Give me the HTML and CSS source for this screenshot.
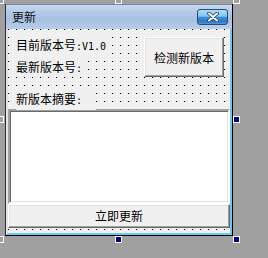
FILE: index.html
```html
<!DOCTYPE html>
<html>

<head>
    <meta charset="utf-8">
    <title>更新</title>
    <link rel="stylesheet" href="styles.css">
</head>

<body>
    <div class="form">
        <div class="titlebar">
            <span class="title">更新</span>
            <span class="close">
                <svg width="12" height="10" viewBox="0 0 12 10">
                    <path d="M2 1.5 L10 8.5 M10 1.5 L2 8.5" stroke="#23385a" stroke-width="3.6" stroke-linecap="round" fill="none"/>
                    <path d="M2 1.5 L10 8.5 M10 1.5 L2 8.5" stroke="#ffffff" stroke-width="2" stroke-linecap="round" fill="none"/>
                </svg>
            </span>
        </div>
        <div class="client">
            <div class="top">
                <span class="label lbl1">目前版本号<span class="half">:V1.0</span></span>
                <button class="check">检测新版本</button>
                <span class="label lbl2">最新版本号<span class="half">:</span></span>
                <span class="label lbl3">新版本摘要<span class="half">:</span></span>
            </div>
            <div class="memo"></div>
            <button class="update">立即更新</button>
            <div class="filler"></div>
        </div>
    </div>

    <!-- selection handles of the designer -->
    <span class="handle h-tl"></span>
    <span class="handle h-tm"></span>
    <span class="handle h-tr"></span>
    <span class="handle h-ml"></span>
    <span class="handle sel h-mr"></span>
    <span class="handle h-bl"></span>
    <span class="handle sel h-bm"></span>
    <span class="handle sel h-br"></span>
</body>

</html>
```

FILE: styles.css
```css
* {
    box-sizing: border-box;
    margin: 0px;
    padding: 0px;
}

body {
    position: relative;
    width: 268px;
    height: 258px;
    overflow: hidden;
    background: #a0a0a0;
    font-family: "Noto Sans CJK SC", "Liberation Sans", sans-serif;
    font-size: 12px;
    color: #000;
}

.form {
    width: 228px;
    margin: 4px 0 0 5px;
    border-left: 1px solid #2e2e2e;
    border-right: 1px solid #000;
    border-bottom: 1px solid #000;
}

.titlebar {
    height: 25px;
    display: flex;
    justify-content: space-between;
    align-items: flex-start;
    padding: 4px 4px 0 6px;
    border-top: 1px solid #6f86a8;
    background: linear-gradient(#c9daee 0%, #b3cae7 30%, #a7c1e2 60%, #b9cfea 100%);
}

.title {
    line-height: 16px;
    font-size: 12px;
    color: #111;
}

.close {
    width: 31px;
    height: 16px;
    display: flex;
    justify-content: center;
    align-items: center;
    border: 1px solid #34486a;
    border-radius: 3px;
    background: linear-gradient(#a9dcf7 0%, #80c8f1 45%, #3e8fd8 50%, #2c78c8 85%, #4f9be0 100%);
}

.client {
    border-left: 2px solid #e4e4e4;
    border-right: 2px solid #6ec8ee;
    border-bottom: 2px solid #6ec8ee;
    background-color: #f0f0f0;
    background-image:
        linear-gradient(to right, transparent 1px, #f0f0f0 1px),
        linear-gradient(to bottom, #000 1px, #f0f0f0 1px);
    background-size: 8px 8px;
}

.top {
    height: 80px;
    padding: 6px 6px 0 8px;
    display: grid;
    grid-template-columns: 1fr 80px;
    grid-template-rows: 22px 22px 12px 18px;
}

.label {
    justify-self: start;
    align-self: center;
    line-height: 16px;
    background: #f0f0f0;
    white-space: nowrap;
}

.half {
    font-family: "DejaVu Sans Mono", monospace;
    font-size: 10px;
}

.lbl1 {
    grid-column: 1;
    grid-row: 1;
}

.lbl2 {
    grid-column: 1;
    grid-row: 2;
}

.lbl3 {
    grid-column: 1;
    grid-row: 4;
    width: 80px;
    line-height: 18px;
}

button {
    font-family: "Noto Sans CJK SC", "Liberation Sans", sans-serif;
    font-size: 12px;
    color: #000;
    background: #f0f0f0;
    border: 1px solid;
    border-color: #ffffff #696969 #696969 #ffffff;
    box-shadow: inset -1px -1px #a0a0a0, inset 1px 1px #e3e3e3;
}

.check {
    grid-column: 2;
    grid-row: 1 / 3;
    align-self: start;
    margin-top: 2px;
    height: 40px;
}

.memo {
    height: 95px;
    background: #fff;
    border: 2px solid;
    border-color: #a0a0a0 #ffffff #ffffff #a0a0a0;
    box-shadow: inset 1px 1px #696969, inset -1px -1px #e3e3e3;
}

.update {
    display: block;
    width: 100%;
    height: 24px;
    line-height: 20px;
}

.filler {
    height: 5px;
}

.handle {
    position: absolute;
    width: 7px;
    height: 7px;
    border: 1px solid #fff;
}

.sel {
    background: #000080;
}

.h-tl { left: -3px; top: -3px; }
.h-tm { left: 115px; top: -3px; }
.h-tr { left: 233px; top: -3px; }
.h-ml { left: -3px; top: 116px; }
.h-mr { left: 233px; top: 116px; }
.h-bl { left: -3px; top: 236px; }
.h-bm { left: 115px; top: 236px; }
.h-br { left: 233px; top: 236px; }
```
